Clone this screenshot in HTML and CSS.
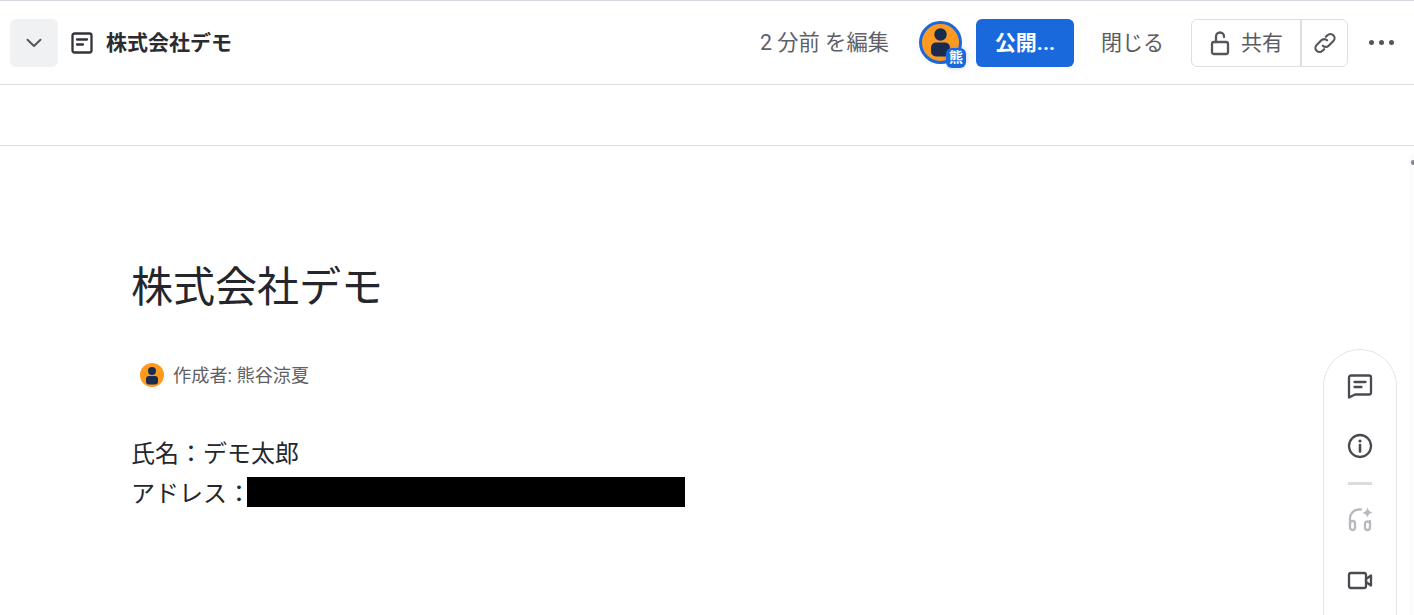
FILE: index.html
```html
<!DOCTYPE html>
<html lang="ja">
<head>
  <meta charset="UTF-8">
  <title>株式会社デモ</title>
  <link rel="stylesheet" href="styles.css">
</head>
<body>
  <header class="toolbar">
    <div class="toolbar-left">
      <button class="back-btn">
        <svg width="18" height="18" viewBox="0 0 18 18" fill="none" stroke="#55565c" stroke-width="2" stroke-linecap="round" stroke-linejoin="round"><path d="M2.500 5.800 9 12l6.500-6.200"/></svg>
      </button>
      <svg class="doc-icon" width="22" height="22" viewBox="0 0 22 22" fill="none" stroke="#33343a" stroke-width="2.300" stroke-linecap="round" stroke-linejoin="round"><rect x="1.500" y="1.500" width="19" height="19" rx="2"/><path d="M6 7.500h10M6 12.500h6"/></svg>
      <span class="doc-name">株式会社デモ</span>
    </div>
    <div class="toolbar-right">
      <span class="edited">2 分前 を編集</span>
      <div class="presence">
        <svg class="avatar-lg" width="43" height="43" viewBox="0 0 43 43"><circle cx="21.500" cy="21.500" r="20" fill="#ff9a1f" stroke="#1a69dc" stroke-width="3"/><circle cx="21.500" cy="13.500" r="6.200" fill="#192b4f"/><rect x="12" y="21.500" width="19" height="14" rx="5" fill="#192b4f"/></svg>
        <span class="presence-badge">熊</span>
      </div>
      <button class="publish-btn">公開...</button>
      <button class="close-btn">閉じる</button>
      <div class="share-group">
        <button class="share-btn">
          <svg width="22" height="26" viewBox="0 0 22 26" fill="none" stroke="#55565c" stroke-width="2.300" stroke-linecap="round" stroke-linejoin="round"><rect x="3" y="12" width="16" height="12" rx="2"/><path d="M7 12V6.500a4 4 0 0 1 8 0V7"/></svg>
          <span>共有</span>
        </button>
        <button class="link-btn">
          <svg width="26" height="26" viewBox="0 0 24 24" fill="none" stroke="#55565c" stroke-width="2" stroke-linecap="round" stroke-linejoin="round"><path d="M10 14.500a3.800 3.800 0 0 0 5.400 0l4.300-4.300a3.800 3.800 0 0 0-5.400-5.400l-1.500 1.500"/><path d="M14 9.500a3.800 3.800 0 0 0-5.400 0l-4.300 4.300a3.800 3.800 0 0 0 5.400 5.400l1.500-1.500"/></svg>
        </button>
      </div>
      <button class="more-btn" aria-label="more"><i></i><i></i><i></i></button>
    </div>
  </header>

  <div class="format-bar"></div>

  <main class="doc">
    <h1 class="doc-title">株式会社デモ</h1>
    <div class="byline">
      <svg width="24" height="24" viewBox="0 0 24 24"><circle cx="12" cy="12" r="12" fill="#ff9a1f"/><circle cx="12" cy="8" r="4" fill="#192b4f"/><rect x="6" y="13" width="12" height="8.500" rx="3" fill="#192b4f"/></svg>
      <span>作成者: 熊谷涼夏</span>
    </div>
    <p class="doc-line">氏名&#xFF1A;デモ太郎</p>
    <p class="doc-line">アドレス&#xFF1A;<span class="redacted"></span></p>
  </main>

  <div class="scroll-strip"><i></i></div>

  <aside class="side-rail">
    <button class="rail-btn">
      <svg width="26" height="26" viewBox="0 0 26 26" fill="none" stroke="#4a4b51" stroke-width="2.300" stroke-linecap="round" stroke-linejoin="round"><path d="M2 4.500A2 2 0 0 1 4 2.500h18a2 2 0 0 1 2 2v15a2 2 0 0 1-2 2H8l-6 3z"/><path d="M7.500 9h11M7.500 14h7"/></svg>
    </button>
    <button class="rail-btn">
      <svg width="26" height="26" viewBox="0 0 26 26" fill="none" stroke="#4a4b51" stroke-width="2.300" stroke-linecap="round"><circle cx="13" cy="13" r="11"/><path d="M13 12v6.500" stroke-width="2.600"/><circle cx="13" cy="8" r="1.600" fill="#4a4b51" stroke="none"/></svg>
    </button>
    <hr class="rail-sep">
    <button class="rail-btn">
      <svg width="26" height="26" viewBox="0 0 26 26" fill="none" stroke="#b9babf" stroke-width="2.300" stroke-linecap="round"><path d="M3 19v-6.500C3 7.500 7 3.500 12 3.500h2"/><rect x="3" y="15" width="5" height="9" rx="2.500"/><path d="M23 15v6.500a2.500 2.500 0 0 1-5 0V18a2.500 2.500 0 0 1 5 0"/><path d="M20.500 1.500l1.500 3.500 3.500 1.500-3.500 1.500-1.500 3.500L19 8.500l-3.500-1.500L19 5z" fill="#b9babf" stroke="none"/></svg>
    </button>
    <button class="rail-btn rail-btn-video">
      <svg width="26" height="26" viewBox="0 0 26 26" fill="none" stroke="#4a4b51" stroke-width="2.300" stroke-linejoin="round"><rect x="2" y="6" width="17" height="15" rx="2"/><path d="M19 12l5-3.500v10L19 15z"/></svg>
    </button>
  </aside>
</body>
</html>
```

FILE: styles.css
```css
* {
  box-sizing: border-box;
}

html, body {
  height: 100%;
}

body {
  margin: 0;
  position: relative;
  overflow: hidden;
  background-color: #fff;
  color: #202124;
  font-family: Roboto, "Noto Sans CJK JP", sans-serif;
  border-top: 1px solid #d9d4e2;
}

button {
  font-family: inherit;
  border: 0;
  background: none;
  padding: 0;
}

.toolbar {
  height: 84px;
  display: flex;
  align-items: center;
  justify-content: space-between;
  padding: 0 20px 0 10px;
  border-bottom: 1px solid #dfdfe2;
}

.toolbar-left,
.toolbar-right {
  display: flex;
  align-items: center;
}

.back-btn {
  width: 48px;
  height: 48px;
  display: flex;
  align-items: center;
  justify-content: center;
  background-color: #f0f1f3;
  border-radius: 6px;
}

.doc-icon {
  margin-left: 13px;
}

/* the CJK font sits low in its line box, so text gets pushed back up */
.doc-name,
.edited,
.publish-btn,
.close-btn,
.share-btn span {
  padding-bottom: 4px;
}

.doc-name {
  margin-left: 13px;
  font-size: 21px;
  font-weight: 700;
  color: #2b2c31;
}

.edited {
  font-size: 21.300px;
  color: #5f6066;
}

.presence {
  position: relative;
  width: 43px;
  height: 43px;
  margin-left: 30px;
}

.avatar-lg {
  display: block;
}

.presence-badge {
  position: absolute;
  right: -4px;
  bottom: -4px;
  width: 20px;
  height: 20px;
  border-radius: 6px;
  background-color: #1a69dc;
  color: #fff;
  font-size: 14px;
  font-weight: 700;
  line-height: 18px;
  text-align: center;
  box-shadow: 0 0 5px rgba(26, 105, 220, 0.3);
}

.publish-btn {
  width: 98px;
  height: 48px;
  margin-left: 14px;
  background-color: #1a69dc;
  border-radius: 6px;
  color: #fff;
  font-size: 21px;
  font-weight: 700;
}

.close-btn {
  margin-left: 27px;
  font-size: 21px;
  color: #5a5b61;
}

.share-group {
  display: flex;
  height: 48px;
  margin-left: 27px;
  border: 1px solid #dfdfe2;
  border-radius: 6px;
}

.share-btn {
  width: 110px;
  display: flex;
  align-items: center;
  justify-content: center;
  gap: 10px;
  border-right: 2px solid #dfdfe2;
  font-size: 21px;
  color: #5a5b61;
}

.link-btn {
  width: 45px;
  display: flex;
  align-items: center;
  justify-content: center;
}

.more-btn {
  display: flex;
  gap: 5px;
  margin-left: 21px;
}

.more-btn i {
  width: 5px;
  height: 5px;
  border-radius: 50%;
  background-color: #55565c;
}

.format-bar {
  height: 61px;
  border-bottom: 1px solid #dfdfe2;
}

.doc {
  padding: 115px 0 0 131px;
}

.doc-title {
  margin: 0;
  font-size: 42px;
  font-weight: 400;
  line-height: 54px;
  color: #25262b;
}

.byline {
  display: flex;
  align-items: center;
  gap: 9px;
  margin: 48px 0 0 9px;
  height: 24px;
  font-size: 18.200px;
  color: #5f6066;
}

.byline span {
  padding-bottom: 3px;
}

.doc-line {
  margin: 0;
  height: 40px;
  font-size: 24px;
  line-height: 40px;
  color: #25262b;
  white-space: nowrap;
}

.byline + .doc-line {
  margin-top: 47px;
}

.redacted {
  display: inline-block;
  width: 438px;
  height: 30px;
  margin-left: -4px;
  background-color: #000;
  vertical-align: -5px;
}

.scroll-strip {
  position: absolute;
  right: 0;
  top: 154px;
  width: 5px;
  height: 460px;
  background-color: #fbfbfb;
}

.scroll-strip i {
  position: absolute;
  right: 0;
  top: 5px;
  width: 3px;
  height: 5px;
  background-color: #8a8b90;
  border-radius: 2px 0 0 2px;
}

.side-rail {
  position: absolute;
  left: 1323px;
  top: 348px;
  width: 74px;
  height: 320px;
  display: flex;
  flex-direction: column;
  align-items: center;
  padding-top: 12px;
  background-color: #fff;
  border: 1px solid #e4e4e7;
  border-radius: 37px;
}

.rail-btn {
  width: 48px;
  height: 48px;
  display: flex;
  align-items: center;
  justify-content: center;
  margin-bottom: 12px;
}

.rail-btn-video {
  margin-top: 1px;
}

.rail-sep {
  width: 24px;
  height: 3px;
  margin: 0 0 10px;
  border: 0;
  background-color: #dcdcdf;
}
```
